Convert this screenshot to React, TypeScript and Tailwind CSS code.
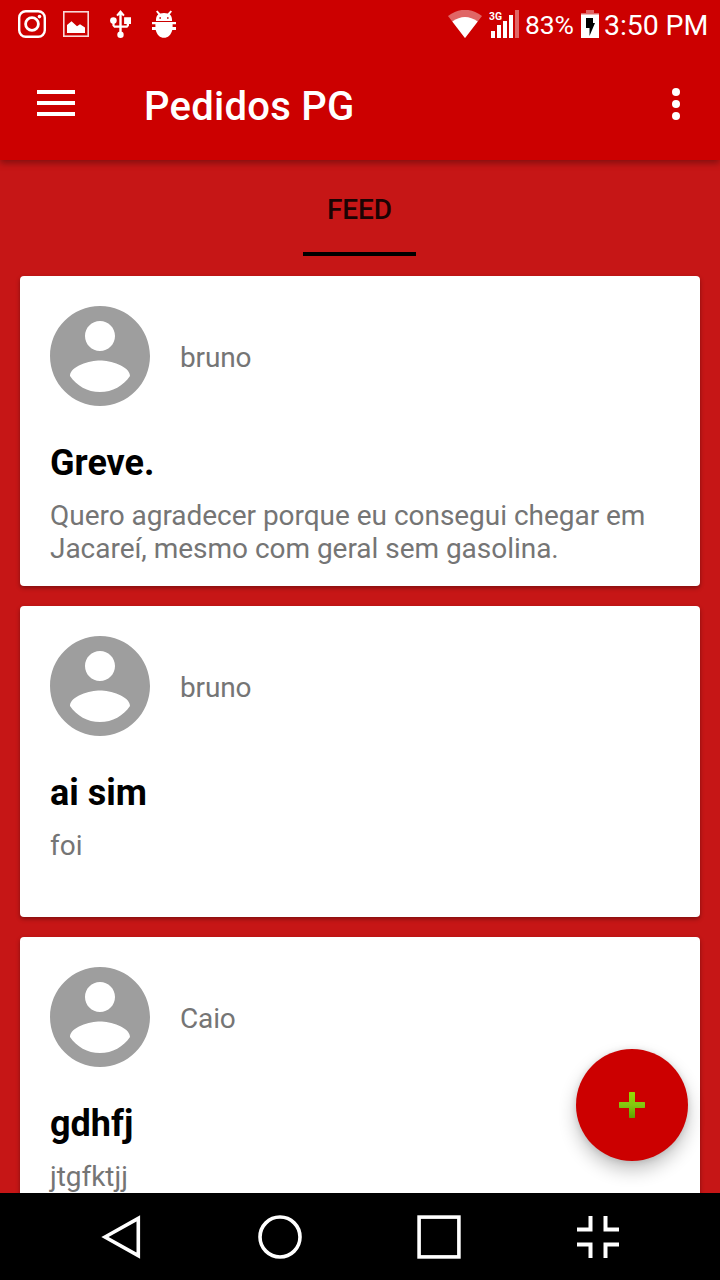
type Post = { author: string; title: string; text: string; height: string };

const posts: Post[] = [
  {
    author: 'bruno',
    title: 'Greve.',
    text: 'Quero agradecer porque eu consegui chegar em Jacareí, mesmo com geral sem gasolina.',
    height: 'h-[310px]',
  },
  { author: 'bruno', title: 'ai sim', text: 'foi', height: 'h-[311px]' },
  { author: 'Caio', title: 'gdhfj', text: 'jtgfktjj', height: 'h-[310px]' },
];

function StatusBar() {
  return (
    <div className="flex h-[50px] items-center justify-between text-white">
      <div className="flex h-full items-center pb-[2px]">
        <svg className="ml-[18px] h-7 w-7" viewBox="0 0 28 28" fill="none" stroke="currentColor">
          <rect x="1.2" y="1.2" width="25.6" height="25.6" rx="6.5" strokeWidth="2.4" />
          <circle cx="14" cy="14" r="6.4" strokeWidth="2.8" />
          <circle cx="21.5" cy="6.6" r="1.8" fill="currentColor" stroke="none" />
        </svg>
        <svg className="ml-[17px] h-[26px] w-[26px]" viewBox="0 0 26 26" fill="currentColor">
          <rect x="0.8" y="0.8" width="24.4" height="24.4" fill="none" stroke="#fff" strokeOpacity="0.85" strokeWidth="1.6" />
          <path d="M4 22V14L8.5 10.3L14 15.3L17 13.3L22 16.5V22Z" />
        </svg>
        <svg className="ml-[20px] h-[30px] w-6" viewBox="0 0 24 30" fill="currentColor">
          <path d="M7.3 5.9L11.5 1L15.7 5.9L14.2 7.2L12.7 5.8V16.6H17.7V15H15.1V8.3H22V15H20V16.8L18.3 18.8H12.7V23H10.3V18.8H5.2L3.4 16.8V13H5.6V16.6H10.3V5.8L8.8 7.2Z" />
          <circle cx="4.4" cy="11.6" r="3.3" />
          <circle cx="11.5" cy="25.8" r="3.2" />
        </svg>
        <svg className="ml-[18px] h-7 w-[26px]" viewBox="0 0 26 28" fill="currentColor">
          <path fillRule="evenodd" d="M5 11V9.5C5 7 6 5.4 7.3 4.4L5 1.6L6.5.6L9.2 3.6Q13 2.4 16.8 3.6L19.5.6L21 1.6L18.7 4.4C20 5.4 21 7 21 9.5V11ZM8.4 7.3H10V8.8H8.4ZM16 7.3H17.6V8.8H16Z" />
          <path d="M1 12H25V14.3H21.6V17H25V20H21.3C20 25 17 27.8 13 27.8S6 25 4.7 20H1V17H4.4V14.3H1Z" />
        </svg>
      </div>
      <div className="flex h-full items-center">
        <svg className="mb-[2px] h-7 w-[34px]" viewBox="0 0 34 28" fill="currentColor">
          <path opacity="0.4" d="M0 6Q17 -6.5 34 6L17 28Z" />
          <path d="M4.3 11.5Q17 2.5 29.7 11.5L17 28Z" />
        </svg>
        <svg className="mb-[2px] ml-[7px] h-[30px] w-[31px]" viewBox="0 0 31 30" fill="currentColor">
          <text x="0" y="10.8" fontFamily="Roboto, sans-serif" fontSize="11.8" fontWeight="700" textLength="13" lengthAdjust="spacingAndGlyphs">3G</text>
          <path d="M2 22H6V29H2ZM8 16H12V29H8ZM14 12H18V29H14ZM20 6H24V29H20Z" />
          <path opacity="0.4" d="M26 1H30V29H26Z" />
        </svg>
        <span className="ml-[5px] w-[50px] whitespace-nowrap text-[26.5px] leading-[50px] tracking-[-0.1px]">83%</span>
        <svg className="mb-[2px] ml-[6px] h-7 w-[18px]" viewBox="0 0 18 28">
          <path fill="#e06666" d="M5 0H13V3H5ZM0 3H18V5H0Z" />
          <rect y="4.5" width="18" height="23.5" fill="#fff" />
          <path d="M5 8H12V13H14L8.5 26V18H5Z" fill="#000" />
        </svg>
        <span className="ml-[5px] mr-[13px] w-[103px] whitespace-nowrap pt-[2px] text-[28.5px] leading-[50px] tracking-[-0.1px]">3:50 PM</span>
      </div>
    </div>
  );
}

function Toolbar() {
  return (
    <div className="flex h-[110px] items-start text-white">
      <button aria-label="Menu" className="ml-[37px] mt-10 flex w-[38px] flex-col gap-[7px]">
        <span className="h-1 w-full bg-white" />
        <span className="h-1 w-full bg-white" />
        <span className="h-1 w-full bg-white" />
      </button>
      <h1 className="ml-[69px] mt-[33px] text-[40px] font-medium leading-[47px] tracking-[0.25px]">Pedidos PG</h1>
      <button aria-label="Mais" className="ml-auto mr-10 mt-[38px] flex flex-col gap-1">
        <span className="h-2 w-2 rounded-full bg-white" />
        <span className="h-2 w-2 rounded-full bg-white" />
        <span className="h-2 w-2 rounded-full bg-white" />
      </button>
    </div>
  );
}

function Avatar() {
  return (
    <svg className="h-[100px] w-[100px] shrink-0" viewBox="2 2 20 20" fill="#9e9e9e">
      <path d="M12 2C6.48 2 2 6.48 2 12s4.48 10 10 10 10-4.48 10-10S17.52 2 12 2zm0 3c1.66 0 3 1.34 3 3s-1.34 3-3 3-3-1.34-3-3 1.34-3 3-3zm0 14.2c-2.5 0-4.71-1.28-6-3.22.03-1.99 4-3.08 6-3.08 1.99 0 5.97 1.09 6 3.08-1.29 1.94-3.5 3.22-6 3.22z" />
    </svg>
  );
}

function PostCard({ post }: { post: Post }) {
  return (
    <article className={`${post.height} shrink-0 rounded-[4px] bg-white px-[30px] pt-[30px] shadow-[0_2px_4px_rgba(0,0,0,0.35)]`}>
      <div className="flex items-center gap-[30px]">
        <Avatar />
        <span className="mt-[3px] text-[28px] leading-[33px] tracking-[-0.15px] text-[#757575]">{post.author}</span>
      </div>
      <h2 className="mt-9 text-[36px] font-bold leading-[42px] text-black">{post.title}</h2>
      <p className="mt-[15px] text-[28px] leading-[33px] tracking-[-0.03px] text-[#757575]">{post.text}</p>
    </article>
  );
}

function NavigationBar() {
  return (
    <nav className="z-20 flex h-[87px] shrink-0 items-center bg-black pl-[101px]">
      <svg className="h-11 w-10" viewBox="0 0 40 44" fill="none" stroke="#fff" strokeWidth="3.6">
        <path d="M4 22L37.3 3.4V40.6Z" />
      </svg>
      <svg className="ml-[117px] h-11 w-11" viewBox="0 0 44 44" fill="none" stroke="#fff" strokeWidth="3.6">
        <circle cx="22" cy="22" r="20" />
      </svg>
      <svg className="ml-[115px] h-11 w-11" viewBox="0 0 44 44" fill="none" stroke="#fff" strokeWidth="3.6">
        <rect x="2.1" y="2.1" width="39.8" height="39.8" />
      </svg>
      <svg className="ml-[116px] h-[42px] w-[42px]" viewBox="0 0 42 42" fill="none" stroke="#fff" strokeWidth="4">
        <path d="M0 13.5H13.5V0M28.5 0V13.5H42M0 28.5H13.5V42M28.5 42V28.5H42" />
      </svg>
    </nav>
  );
}

export default function App() {
  return (
    <div className="relative flex h-[1280px] w-[720px] flex-col overflow-hidden bg-[#c61616] font-['Roboto',sans-serif]">
      <header className="z-10 shrink-0 bg-[#cc0000] shadow-[0_3px_7px_rgba(0,0,0,0.35)]">
        <StatusBar />
        <Toolbar />
      </header>
      <div className="flex h-24 shrink-0 justify-center pr-[1px]">
        <div className="w-[113px] border-b-4 border-black pt-[33px] text-center text-[28px] font-medium leading-[33px] tracking-[-0.1px] text-[#1c0303]">
          FEED
        </div>
      </div>
      <main className="flex min-h-0 flex-1 flex-col gap-5 overflow-hidden px-5 pt-5">
        {posts.map((post) => (
          <PostCard key={post.title} post={post} />
        ))}
      </main>
      <NavigationBar />
      <button
        aria-label="Adicionar"
        className="absolute bottom-[119px] right-8 z-10 flex h-28 w-28 items-center justify-center rounded-full bg-[#cc0000] shadow-[0_9px_18px_rgba(0,0,0,0.24),0_1px_6px_rgba(0,0,0,0.12)]"
      >
        <svg className="h-[26px] w-[26px]" viewBox="0 0 26 26">
          <defs>
            <linearGradient id="plus" x2="0" y2="1">
              <stop offset="0" stopColor="#94dc00" />
              <stop offset="0.5" stopColor="#84c810" />
              <stop offset="1" stopColor="#5fa000" />
            </linearGradient>
          </defs>
          <path d="M10.5 0H15.5L16 .5V10H25.5L26 10.5V15.5L25.5 16H16V25.5L15.5 26H10.5L10 25.5V16H.5L0 15.5V10.5L.5 10H10V.5Z" fill="url(#plus)" />
        </svg>
      </button>
    </div>
  );
}
